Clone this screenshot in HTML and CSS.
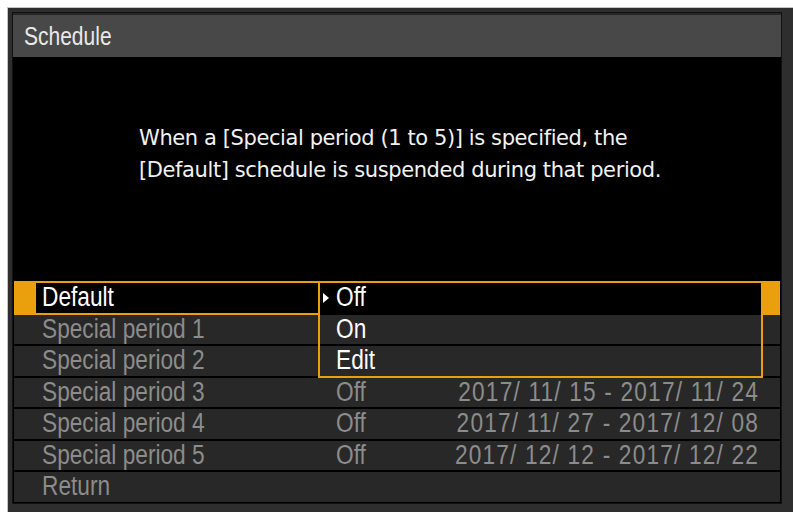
FILE: index.html
```html
<!DOCTYPE html>
<html lang="en">
<head>
    <meta charset="UTF-8">
    <meta name="viewport" content="width=device-width, initial-scale=1.0">
    <title>Schedule</title>
    <link rel="stylesheet" href="styles.css">
</head>
<body>
    <div class="screen">
        <div class="panel">
            <div class="title-bar"><span class="narrow">Schedule</span></div>

            <div class="message">
                <p>When a [Special period (1 to 5)] is specified, the<br>[Default] schedule is suspended during that period.</p>
            </div>

            <div class="menu">
                <div class="row selected">
                    <span class="label"><span class="narrow">Default</span></span>
                </div>
                <div class="row">
                    <span class="label"><span class="narrow">Special period 1</span></span>
                </div>
                <div class="row">
                    <span class="label"><span class="narrow">Special period 2</span></span>
                </div>
                <div class="row">
                    <span class="label"><span class="narrow">Special period 3</span></span>
                    <span class="value"><span class="narrow">Off</span></span>
                    <span class="dates"><span class="narrow">2017/ 11/ 15 - 2017/ 11/ 24</span></span>
                </div>
                <div class="row">
                    <span class="label"><span class="narrow">Special period 4</span></span>
                    <span class="value"><span class="narrow">Off</span></span>
                    <span class="dates"><span class="narrow">2017/ 11/ 27 - 2017/ 12/ 08</span></span>
                </div>
                <div class="row">
                    <span class="label"><span class="narrow">Special period 5</span></span>
                    <span class="value"><span class="narrow">Off</span></span>
                    <span class="dates"><span class="narrow">2017/ 12/ 12 - 2017/ 12/ 22</span></span>
                </div>
                <div class="row">
                    <span class="label"><span class="narrow">Return</span></span>
                </div>

                <!-- drop-down list for the Default item -->
                <div class="popup">
                    <div class="option current">
                        <svg class="pointer" width="6" height="10" viewBox="0 0 6 10"><polygon points="0,0 6,5 0,10" fill="#fff"/></svg>
                        <span class="narrow">Off</span>
                    </div>
                    <div class="option"><span class="narrow">On</span></div>
                    <div class="option"><span class="narrow">Edit</span></div>
                </div>
            </div>
        </div>
    </div>
</body>
</html>
```

FILE: styles.css
```css
body {
    margin: 0;
    padding: 0;
    background-color: #fff;
    font-family: "Liberation Sans", Arial, sans-serif;
}

/* no narrow face installed, so squeeze the regular one */
.narrow {
    display: inline-block;
    white-space: nowrap;
    transform: scaleX(0.84);
    transform-origin: left center;
}

.screen {
    margin: 7px 0 0 7px;
    width: 778px;
    height: 500px;
    border: 1px solid #c4c4c4;
    background-color: #2e2e2e;
    padding: 4px;
}

.panel {
    width: 770px;
    height: 492px;
    background-color: #000;
    border: 1px solid #111;
    box-sizing: border-box;
    display: flex;
    flex-direction: column;
}

.title-bar {
    height: 44px;
    background-color: #484848;
    border-top: 2px solid #262626;
    box-sizing: border-box;
    color: #e8e8e8;
    font-size: 25px;
    line-height: 43px;
    padding-left: 11px;
}

.message {
    height: 224px;
    display: flex;
    justify-content: center;
    padding-left: 6px;
}

.message p {
    margin: 0;
    padding-top: 65px;
    font-family: "DejaVu Sans", sans-serif;
    font-size: 21px;
    letter-spacing: -0.4px;
    line-height: 32px;
    color: #f2f2f2;
}

.menu {
    position: relative;
    display: flex;
    flex-direction: column;
    gap: 2px;
    padding: 0 1px;
}

.row {
    height: 29.5px;
    background-color: #282828;
    display: flex;
    align-items: center;
    font-size: 27px;
    color: #8c8c8c;
    padding: 0 21px 0 28px;
}

.label {
    width: 294px;
    flex-shrink: 0;
}

.value {
    width: 80px;
    flex-shrink: 0;
}

.dates {
    flex: 1;
    min-width: 0;
    display: flex;
    justify-content: flex-end;
}

.dates .narrow {
    letter-spacing: 1.4px;
    transform-origin: right center;
}

/* highlighted item: orange frame with solid end caps */
.row.selected {
    background-color: #000;
    color: #fff;
    border: 2px solid #e9a00c;
    border-left: 22px solid #e9a00c;
    border-right: 20px solid #e9a00c;
    padding-left: 6px;
    height: 33.5px;
    margin-bottom: -2px;
    box-sizing: border-box;
}

.popup {
    position: absolute;
    left: 305px;
    top: 0;
    width: 445px;
    height: 97px;
    border: 2px solid #e9a00c;
    box-sizing: border-box;
    background-color: #000;
    display: flex;
    flex-direction: column;
    gap: 2px;
}

.option {
    height: 29.5px;
    background-color: #282828;
    color: #fff;
    font-size: 27px;
    display: flex;
    align-items: center;
    padding-left: 16px;
}

.option.current {
    background-color: #000;
    position: relative;
}

.pointer {
    position: absolute;
    left: 3px;
    top: 10px;
}
```
